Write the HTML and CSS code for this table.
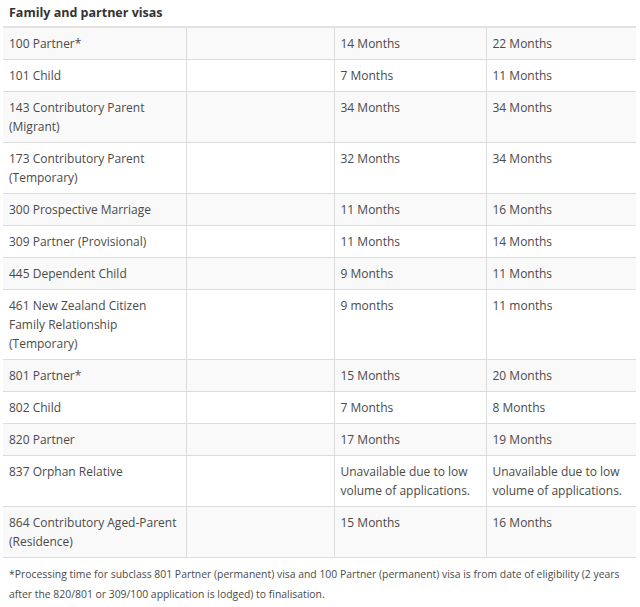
FILE: index.html
```html
<!DOCTYPE html>
<html>
<head>
<meta charset="utf-8">
<link rel="stylesheet" href="styles.css">
</head>
<body>
<div class="wrap">
  <h3 class="title">Family and partner visas</h3>
  <table class="visas">
    <colgroup>
      <col class="c1"><col class="c2"><col class="c3"><col class="c4">
    </colgroup>
    <tbody>
      <tr><td>100 Partner*</td><td></td><td>14 Months</td><td>22 Months</td></tr>
      <tr><td>101 Child</td><td></td><td>7 Months</td><td>11 Months</td></tr>
      <tr><td>143 Contributory Parent<br>(Migrant)</td><td></td><td>34 Months</td><td>34 Months</td></tr>
      <tr><td>173 Contributory Parent<br>(Temporary)</td><td></td><td>32 Months</td><td>34 Months</td></tr>
      <tr><td>300 Prospective Marriage</td><td></td><td>11 Months</td><td>16 Months</td></tr>
      <tr><td>309 Partner (Provisional)</td><td></td><td>11 Months</td><td>14 Months</td></tr>
      <tr><td>445 Dependent Child</td><td></td><td>9 Months</td><td>11 Months</td></tr>
      <tr><td>461 New Zealand Citizen<br>Family Relationship<br>(Temporary)</td><td></td><td>9 months</td><td>11 months</td></tr>
      <tr><td>801 Partner*</td><td></td><td>15 Months</td><td>20 Months</td></tr>
      <tr><td>802 Child</td><td></td><td>7 Months</td><td>8 Months</td></tr>
      <tr><td>820 Partner</td><td></td><td>17 Months</td><td>19 Months</td></tr>
      <tr><td>837 Orphan Relative</td><td></td><td>Unavailable due to low<br>volume of applications.</td><td>Unavailable due to low<br>volume of applications.</td></tr>
      <tr><td><span class="nw">864 Contributory Aged-Parent</span><br>(Residence)</td><td></td><td>15 Months</td><td>16 Months</td></tr>
    </tbody>
  </table>
  <p class="note">*Processing time for subclass 801 Partner (permanent) visa and 100 Partner (permanent) visa is from date of eligibility (2 years after the 820/801 or 309/100 application is lodged) to finalisation.</p>
</div>
</body>
</html>
```
FILE: styles.css
```css
html, body {
  margin: 0;
  padding: 0;
  background: #fff;
}
body {
  font-family: "Open Sans", "Noto Sans", sans-serif;
  color: #333;
}
.wrap {
  padding: 0 4px 0 3px;
}
.title {
  margin: 0;
  padding: 3px 0 0 6px;
  height: 26px;
  box-sizing: border-box;
  font-size: 12.5px;
  font-weight: 700;
  line-height: 19px;
  color: #333;
}
.visas {
  width: 633px;
  border-collapse: collapse;
  table-layout: fixed;
  border-top: 2px solid #e2e2e2;
  font-size: 12px;
  line-height: 19px;
  color: #4a4a4a;
}
.c1 { width: 183px; }
.c2 { width: 148px; }
.c3 { width: 152px; }
.c4 { width: 150px; }
.visas td {
  vertical-align: top;
  padding: 6px 6px 6px 6px;
  border-bottom: 1px solid #dcdcdc;
  border-left: 1px solid #dcdcdc;
}
.visas td:first-child {
  border-left: none;
}
.visas tr:nth-child(odd) td {
  background: #f9f9f9;
}
.nw {
  white-space: nowrap;
}
.note {
  margin: 0;
  padding: 6px 6px 0 6px;
  font-size: 10.4px;
  line-height: 20px;
  color: #4a4a4a;
}
```
